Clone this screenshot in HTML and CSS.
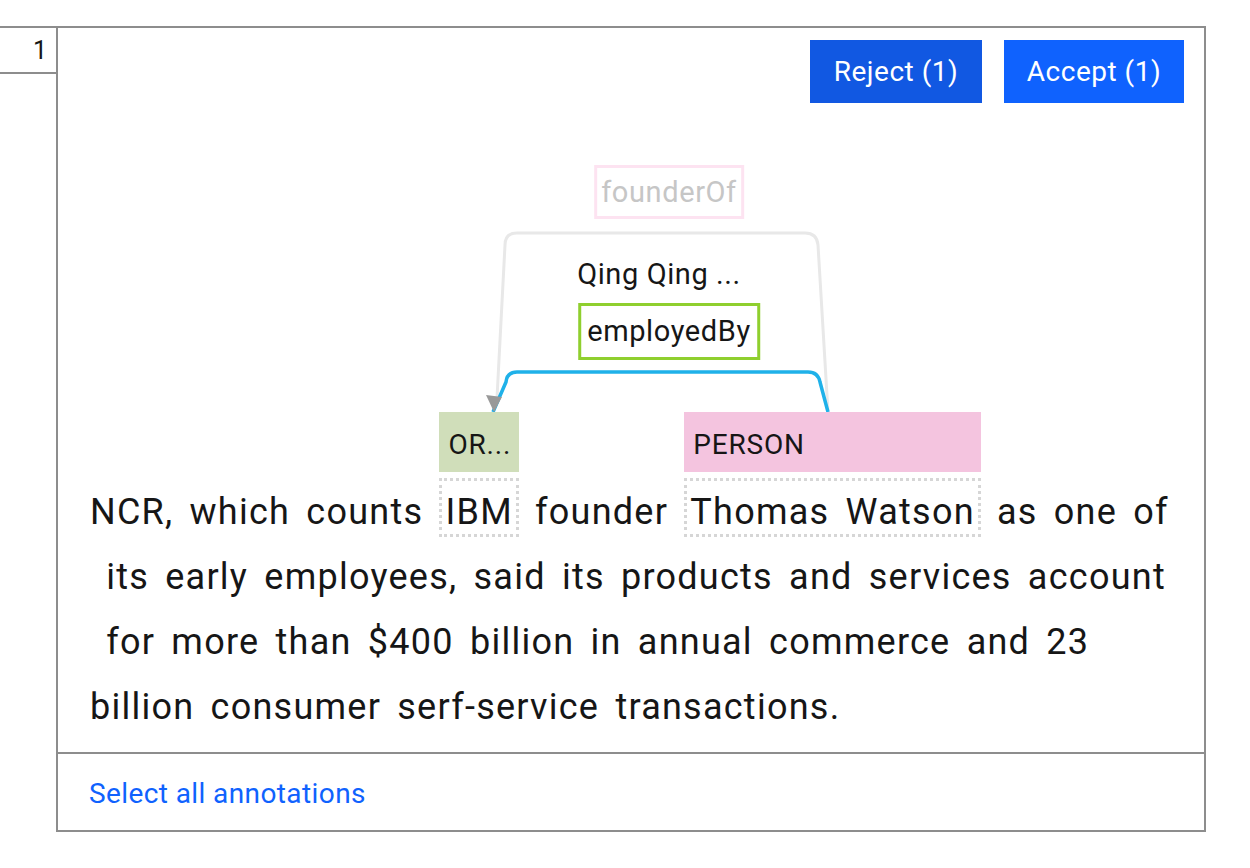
FILE: index.html
```html
<!DOCTYPE html>
<html lang="en">
<head>
<meta charset="utf-8">
<title>Annotation review</title>
<link rel="stylesheet" href="styles.css">
</head>
<body>
<div class="sheet">
  <div class="num">1</div>
  <div class="cell">
    <div class="toolbar">
      <button class="btn btn-reject">Reject (1)</button>
      <button class="btn btn-accept">Accept (1)</button>
    </div>
    <div class="annot">
      <svg class="arcs" width="1146" height="320" viewBox="0 0 1146 320">
        <path class="arc-faded" d="M 770 309 L 760 142 Q 759 130 747 130 L 459 130 Q 447 130 447 142 L 439 295"/>
        <path class="arc-active" d="M 770 309 L 762 279 Q 760 269 750 269 L 459 269 Q 449 269 448 279 L 435 309"/>
        <polygon class="arrow" points="428,292 444,294 436,309"/>
      </svg>
      <div class="rel rel-faded">founderOf</div>
      <div class="rel-author">Qing Qing ...</div>
      <div class="rel rel-active">employedBy</div>
      <div class="text">
        <span class="line">NCR, which counts <span class="token"><span class="label label-org">OR...</span>IBM</span> founder <span class="token"><span class="label label-person">PERSON</span>Thomas Watson</span> as one of</span>
        <span class="line">&nbsp;its early employees, said its products and services account</span>
        <span class="line">&nbsp;for more than $400 billion in annual commerce and 23</span>
        <span class="line">billion consumer serf-service transactions.</span>
      </div>
    </div>
    <div class="footer"><a class="link" href="#">Select all annotations</a></div>
  </div>
</div>
</body>
</html>
```
FILE: styles.css
```css
* { box-sizing: border-box; }
body {
  margin: 0;
  background: #ffffff;
  color: #161616;
  font-family: Roboto, "Noto Sans", sans-serif;
}
.sheet {
  margin-top: 26px;
  width: 1206px;
  border-top: 2px solid #8d8d8d;
  display: grid;
  grid-template-columns: 56px 1fr;
  align-items: start;
}
.num {
  height: 46px;
  border-bottom: 2px solid #8d8d8d;
  text-align: right;
  padding: 9px 9px 0 0;
  font-size: 25px;
  line-height: 28px;
}
.cell {
  border-left: 2px solid #8d8d8d;
  border-right: 2px solid #8d8d8d;
  border-bottom: 2px solid #8d8d8d;
}
.toolbar {
  display: flex;
  justify-content: flex-end;
  gap: 22px;
  padding: 12px 20px 0 0;
}
.btn {
  height: 63px;
  border: 0;
  padding: 0;
  color: #ffffff;
  font-family: inherit;
  font-size: 28px;
  letter-spacing: 0.5px;
  cursor: pointer;
}
.btn-reject { background: #1158e2; width: 172px; }
.btn-accept { background: #0f62fe; width: 180px; }
.annot {
  position: relative;
  padding: 377px 0 12px 32px;
}
.arcs {
  position: absolute;
  left: 0;
  top: 0;
  overflow: visible;
}
.arc-faded { fill: none; stroke: #e8e8e8; stroke-width: 3; }
.arc-active { fill: none; stroke: #1fb1e9; stroke-width: 3.5; }
.arrow { fill: #999999; }
.rel {
  position: absolute;
  left: 611px;
  transform: translateX(-50%);
  border: 3px solid;
  background: #ffffff;
  font-size: 29px;
  letter-spacing: 0.6px;
  white-space: nowrap;
}
.rel-faded {
  top: 62px;
  height: 54px;
  line-height: 48px;
  padding: 0 4px;
  border-color: #fde3f1;
  color: #c6c6c6;
}
.rel-active {
  top: 200px;
  height: 57px;
  line-height: 50px;
  padding: 0 6px;
  border-color: #8fcf2e;
  color: #161616;
}
.rel-author {
  position: absolute;
  left: 601px;
  top: 153px;
  transform: translateX(-50%);
  font-size: 29px;
  letter-spacing: 0.6px;
  line-height: 36px;
  white-space: nowrap;
}
.text {
  font-size: 36px;
  line-height: 65px;
  letter-spacing: 1.25px;
  word-spacing: 6px;
}
.line { display: block; white-space: nowrap; }
.token {
  position: relative;
  display: inline-block;
  border: 3px dotted #d6d6d6;
  padding: 10px 3px 1px;
  line-height: 42px;
  margin-top: -3px;
}
.label {
  position: absolute;
  left: -3px;
  right: -3px;
  bottom: calc(100% + 9px);
  height: 60px;
  padding: 17px 0 0 9px;
  font-size: 28px;
  line-height: 32px;
  letter-spacing: 0.8px;
  word-spacing: 0;
  white-space: nowrap;
  overflow: hidden;
}
.label-org { background: #d0deba; }
.label-person { background: #f4c4df; }
.footer {
  border-top: 2px solid #8d8d8d;
  height: 78px;
  display: flex;
  align-items: center;
  padding: 3px 0 0 31px;
}
.link {
  color: #0f62fe;
  font-size: 28px;
  letter-spacing: 0.4px;
  text-decoration: none;
}
```
